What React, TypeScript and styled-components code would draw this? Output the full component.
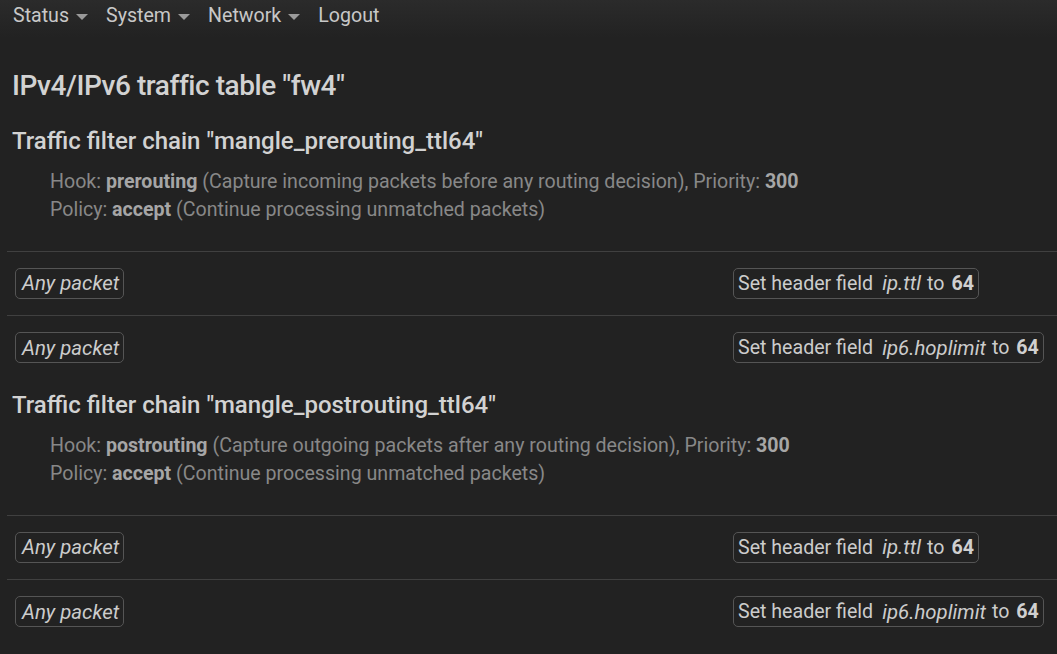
import React from 'react';
import styled, { createGlobalStyle } from 'styled-components';

const GlobalStyle = createGlobalStyle`
  html, body {
    margin: 0;
    padding: 0;
    background: #222222;
    color: #cccccc;
    font-family: Roboto, "Liberation Sans", sans-serif;
  }
`;

const NavBar = styled.nav`
  height: 38px;
  display: flex;
  align-items: flex-start;
  gap: 18px;
  padding: 3px 13px 0;
  box-sizing: border-box;
  background: linear-gradient(180deg, #2b2b2b 0%, #222222 100%);
`;

const NavItem = styled.a`
  display: flex;
  align-items: center;
  gap: 7px;
  font-size: 19.6px;
  line-height: 25px;
  color: #c8c8c8;
  text-decoration: none;
  cursor: pointer;
`;

const Caret = styled.span`
  width: 0;
  height: 0;
  border-left: 6px solid transparent;
  border-right: 6px solid transparent;
  border-top: 6px solid #9a9a9a;
  margin-top: 2px;
`;

const Main = styled.main`
  padding: 0 0 0 7px;
`;

const TableTitle = styled.h2`
  margin: 31px 0 0 5px;
  font-size: 28px;
  line-height: 34px;
  font-weight: 500;
  color: #d2d2d2;
  letter-spacing: -0.45px;
`;

const ChainTitle = styled.h3<{ $first?: boolean }>`
  margin: ${p => (p.$first ? '23px' : '10.5px')} 0 0 5px;
  font-size: 24px;
  line-height: 30px;
  font-weight: 500;
  color: #d2d2d2;
`;

const ChainInfo = styled.div`
  margin: 12px 0 26.5px 43px;
  font-size: 19.6px;
  line-height: 28px;
  color: #888888;

  strong {
    color: #a6a6a6;
    font-weight: 700;
  }
`;

const RuleTable = styled.div`
  display: flex;
  flex-direction: column;
`;

const RuleRow = styled.div`
  display: grid;
  grid-template-columns: 718px 1fr;
  align-items: center;
  height: 64.5px;
  border-top: 1px solid #404040;
  box-sizing: border-box;
`;

const Cell = styled.div`
  padding: 0 8px;
`;

const Badge = styled.span`
  display: inline-flex;
  align-items: center;
  gap: 6px;
  height: 31px;
  box-sizing: border-box;
  padding: 0 4px;
  border: 1px solid #555555;
  border-radius: 5px;
  font-size: 19.6px;
  color: #cccccc;
  white-space: nowrap;

  em, var {
    font-style: italic;
    font-size: 20.4px;
  }
  em {
    margin-left: 2px;
  }
  var {
    margin-left: 3px;
  }
  strong {
    font-weight: 700;
    color: #d0d0d0;
    margin-left: 1px;
  }
`;

type Rule = { field: string; value: string };

const rules: Rule[] = [
  { field: 'ip.ttl', value: '64' },
  { field: 'ip6.hoplimit', value: '64' },
];

const chains = [
  {
    name: 'mangle_prerouting_ttl64',
    hook: 'prerouting',
    hookDesc: 'Capture incoming packets before any routing decision',
  },
  {
    name: 'mangle_postrouting_ttl64',
    hook: 'postrouting',
    hookDesc: 'Capture outgoing packets after any routing decision',
  },
];

const App: React.FC = () => {
  return (
    <>
      <GlobalStyle />
      <NavBar>
        <NavItem>Status <Caret /></NavItem>
        <NavItem>System <Caret /></NavItem>
        <NavItem>Network <Caret /></NavItem>
        <NavItem>Logout</NavItem>
      </NavBar>
      <Main>
        <TableTitle>IPv4/IPv6 traffic table "fw4"</TableTitle>
        {chains.map((chain, i) => (
          <React.Fragment key={chain.name}>
            <ChainTitle $first={i === 0}>Traffic filter chain "{chain.name}"</ChainTitle>
            <ChainInfo>
              <div>
                Hook: <strong>{chain.hook}</strong> ({chain.hookDesc}), Priority: <strong>300</strong>
              </div>
              <div>
                Policy: <strong>accept</strong> (Continue processing unmatched packets)
              </div>
            </ChainInfo>
            <RuleTable>
              {rules.map(rule => (
                <RuleRow key={rule.field}>
                  <Cell>
                    <Badge><em>Any packet</em></Badge>
                  </Cell>
                  <Cell>
                    <Badge>
                      <span>Set header field</span>
                      <var>{rule.field}</var>
                      <span>to</span>
                      <strong>{rule.value}</strong>
                    </Badge>
                  </Cell>
                </RuleRow>
              ))}
            </RuleTable>
          </React.Fragment>
        ))}
      </Main>
    </>
  );
};

export default App;
